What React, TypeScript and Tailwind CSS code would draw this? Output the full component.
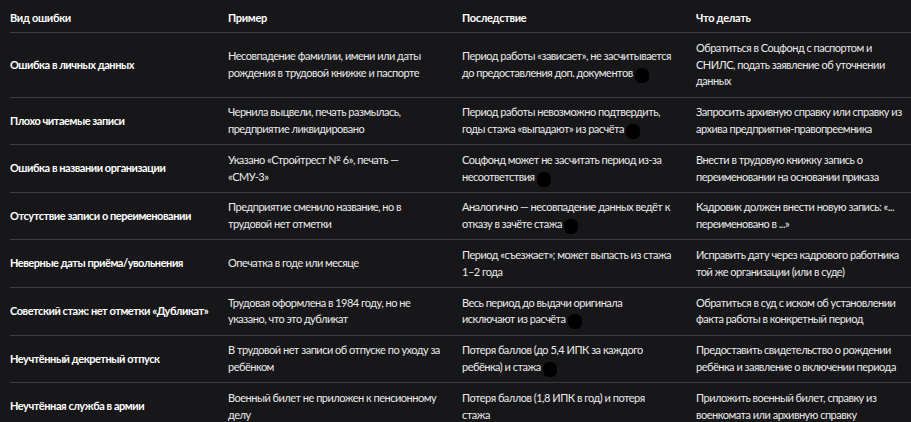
type Row = {
  kind: string
  example: string[]
  effect: string[]
  cite?: boolean
  action: string[]
}

const rows: Row[] = [
  {
    kind: 'Ошибка в личных данных',
    example: ['Несовпадение фамилии, имени или даты', 'рождения в трудовой книжке и паспорте'],
    effect: ['Период работы «зависает», не засчитывается', 'до предоставления доп. документов'],
    cite: true,
    action: ['Обратиться в Соцфонд с паспортом и', 'СНИЛС, подать заявление об уточнении', 'данных'],
  },
  {
    kind: 'Плохо читаемые записи',
    example: ['Чернила выцвели, печать размылась,', 'предприятие ликвидировано'],
    effect: ['Период работы невозможно подтвердить,', 'годы стажа «выпадают» из расчёта'],
    cite: true,
    action: ['Запросить архивную справку или справку из', 'архива предприятия-правопреемника'],
  },
  {
    kind: 'Ошибка в названии организации',
    example: ['Указано «Стройтрест № 6», печать —', '«СМУ-3»'],
    effect: ['Соцфонд может не засчитать период из-за', 'несоответствия'],
    cite: true,
    action: ['Внести в трудовую книжку запись о', 'переименовании на основании приказа'],
  },
  {
    kind: 'Отсутствие записи о переименовании',
    example: ['Предприятие сменило название, но в', 'трудовой нет отметки'],
    effect: ['Аналогично — несовпадение данных ведёт к', 'отказу в зачёте стажа'],
    cite: true,
    action: ['Кадровик должен внести новую запись: «...', 'переименовано в ...»'],
  },
  {
    kind: 'Неверные даты приёма/увольнения',
    example: ['Опечатка в годе или месяце'],
    effect: ['Период «съезжает»; может выпасть из стажа', '1–2 года'],
    action: ['Исправить дату через кадрового работника', 'той же организации (или в суде)'],
  },
  {
    kind: 'Советский стаж: нет отметки «Дубликат»',
    example: ['Трудовая оформлена в 1984 году, но не', 'указано, что это дубликат'],
    effect: ['Весь период до выдачи оригинала', 'исключают из расчёта'],
    cite: true,
    action: ['Обратиться в суд с иском об установлении', 'факта работы в конкретный период'],
  },
  {
    kind: 'Неучтённый декретный отпуск',
    example: ['В трудовой нет записи об отпуске по уходу за', 'ребёнком'],
    effect: ['Потеря баллов (до 5,4 ИПК за каждого', 'ребёнка) и стажа'],
    cite: true,
    action: ['Предоставить свидетельство о рождении', 'ребёнка и заявление о включении периода'],
  },
  {
    kind: 'Неучтённая служба в армии',
    example: ['Военный билет не приложен к пенсионному', 'делу'],
    effect: ['Потеря баллов (1,8 ИПК в год) и потеря', 'стажа'],
    action: ['Приложить военный билет, справку из', 'военкомата или архивную справку'],
  },
]

// citation pill after the last line; negative margins keep the line box height
const Cite = () => (
  <span className="-my-[4px] ml-[2px] inline-block h-[15px] w-[14px] rounded-[6px] bg-black align-[-2px]" />
)

const Lines = ({ lines, cite }: { lines: string[]; cite?: boolean }) => (
  <div className="flex flex-col tracking-[-0.5px]">
    {lines.map((line, i) => (
      <span key={i} className="whitespace-nowrap">
        {line}
        {cite && i === lines.length - 1 && <Cite />}
      </span>
    ))}
  </div>
)

const cols = 'grid grid-cols-[218px_234px_234px_1fr] items-center'

export default function App() {
  return (
    <div
      className="h-[422px] w-[911px] overflow-hidden bg-[#171719] pl-[10px] text-[11px] leading-[16.8px] text-[#ebebeb]"
      style={{ fontFamily: 'Lato, "Noto Sans", sans-serif' }}
    >
      <div className={`${cols} border-b border-[#3d3d40] pb-[6px] pt-[9.5px] font-bold tracking-[-0.3px] text-white`}>
        <div>Вид ошибки</div>
        <div>Пример</div>
        <div>Последствие</div>
        <div>Что делать</div>
      </div>
      {rows.map((row) => (
        <div key={row.kind} className={`${cols} border-b border-[#3d3d40] py-[6.5px]`}>
          <div className="whitespace-nowrap font-bold tracking-[-0.45px] text-white">{row.kind}</div>
          <Lines lines={row.example} />
          <Lines lines={row.effect} cite={row.cite} />
          <Lines lines={row.action} />
        </div>
      ))}
    </div>
  )
}
